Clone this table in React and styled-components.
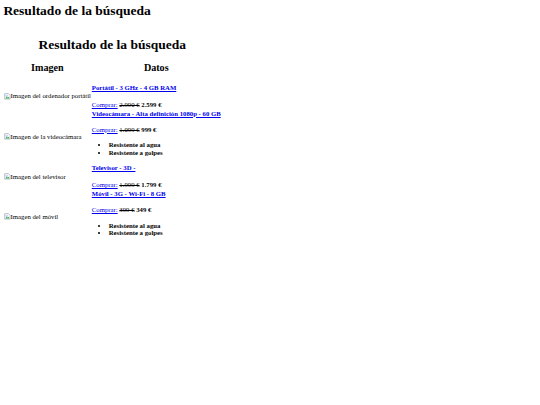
import React from 'react';
import styled, { createGlobalStyle } from 'styled-components';

// sizes are the ones of a 1280px-wide page shown at 540px (x 0.421875)
const GlobalStyle = createGlobalStyle`
    html {
        background: #fff;
    }
    body {
        margin: 3.375px;
        font-family: 'Liberation Serif', 'Times New Roman', serif;
        font-size: 6.75px;
        line-height: 1.15;
        color: #000;
    }
`;

const PageTitle = styled.h1`
    font-size: 13.5px;
    line-height: 1.15;
    font-weight: bold;
    margin: 0 0 9.05px;
`;

const ResultsTable = styled.table`
    border-collapse: separate;
    border-spacing: 0.84px;
`;

const Caption = styled.caption`
    font-size: 13.5px;
    line-height: 1.15;
    font-weight: bold;
    padding: 9.05px 0;
`;

const HeadCell = styled.th`
    font-size: 10.125px;
    line-height: 1.15;
    font-weight: bold;
    padding: 0.42px 0.42px 2.6px;
    text-align: center;
`;

const ImageCell = styled.td`
    padding: 0.42px;
    vertical-align: middle;
`;

const DataCell = styled.td`
    padding: 0.42px;
    vertical-align: middle;

    & > :first-child {
        margin-top: 7.6px;
    }
    & > :last-child {
        margin-bottom: 0;
    }
`;

const BrokenImage = styled.span`
    display: inline-flex;
    align-items: center;
    white-space: nowrap;

    svg {
        flex: none;
    }
`;

const ProductLink = styled.a`
    display: block;
    margin: ${(props) => (props.$afterPrice ? '0.8px' : '0')} 0 0;
    font-weight: bold;
    color: #0000ee;
    text-decoration: underline;
    white-space: nowrap;
`;

const PriceLine = styled.p`
    margin: ${(props) => (props.$afterTitle ? '9.1px' : '0')} 0 0;
    white-space: nowrap;
`;

const BuyLink = styled.a`
    color: #0000ee;
    text-decoration: underline;
`;

const Features = styled.ul`
    margin: 8px 0 0;
    padding-left: 16.875px;
    list-style: disc;
    font-weight: bold;
    line-height: 1.08;
`;

const ImageIcon = () => (
    <svg width="6.75" height="6.75" viewBox="0 0 16 16">
        <path d="M1.5 1.5h9l4 4v9h-13z" fill="#fff" stroke="#9aa0a6" strokeWidth="1.5" />
        <rect x="3" y="4" width="7" height="5" fill="#c6dafc" />
        <path d="M3 13l3.5-4.5 2.5 2.5 2-2 2 4z" fill="#34a853" />
    </svg>
);

const rows = [
    {
        alt: 'Imagen del ordenador portátil',
        items: [
            { kind: 'title', text: 'Portátil - 3 GHz - 4 GB RAM' },
            { kind: 'price', was: '2.990 €', now: '2.599 €' },
            { kind: 'title', text: 'Videocámara - Alta definición 1080p - 60 GB' },
        ],
    },
    {
        alt: 'Imagen de la videocámara',
        items: [
            { kind: 'price', was: '1.099 €', now: '999 €' },
            { kind: 'features', list: ['Resistente al agua', 'Resistente a golpes'] },
        ],
    },
    {
        alt: 'Imagen del televisor',
        items: [
            { kind: 'title', text: 'Televisor - 3D -' },
            { kind: 'price', was: '1.999 €', now: '1.799 €' },
            { kind: 'title', text: 'Móvil - 3G - Wi-Fi - 8 GB' },
        ],
    },
    {
        alt: 'Imagen del móvil',
        items: [
            { kind: 'price', was: '399 €', now: '349 €' },
            { kind: 'features', list: ['Resistente al agua', 'Resistente a golpes'] },
        ],
    },
];

const renderItem = (item, i, items) => {
    const prev = i > 0 ? items[i - 1].kind : null;
    if (item.kind === 'title') {
        return (
            <ProductLink key={i} href="#" $afterPrice={prev === 'price'}>
                {item.text}
            </ProductLink>
        );
    }
    if (item.kind === 'price') {
        return (
            <PriceLine key={i} $afterTitle={prev === 'title'}>
                <BuyLink href="#">Comprar:</BuyLink> <del>{item.was}</del> <strong>{item.now}</strong>
            </PriceLine>
        );
    }
    return (
        <Features key={i}>
            {item.list.map((f) => (
                <li key={f}>{f}</li>
            ))}
        </Features>
    );
};

const App = () => (
    <>
        <GlobalStyle />
        <PageTitle>Resultado de la búsqueda</PageTitle>
        <ResultsTable>
            <Caption>Resultado de la búsqueda</Caption>
            <thead>
                <tr>
                    <HeadCell>Imagen</HeadCell>
                    <HeadCell>Datos</HeadCell>
                </tr>
            </thead>
            <tbody>
                {rows.map((row) => (
                    <tr key={row.alt}>
                        <ImageCell>
                            <BrokenImage>
                                <ImageIcon />
                                {row.alt}
                            </BrokenImage>
                        </ImageCell>
                        <DataCell>{row.items.map(renderItem)}</DataCell>
                    </tr>
                ))}
            </tbody>
        </ResultsTable>
    </>
);

export default App;
